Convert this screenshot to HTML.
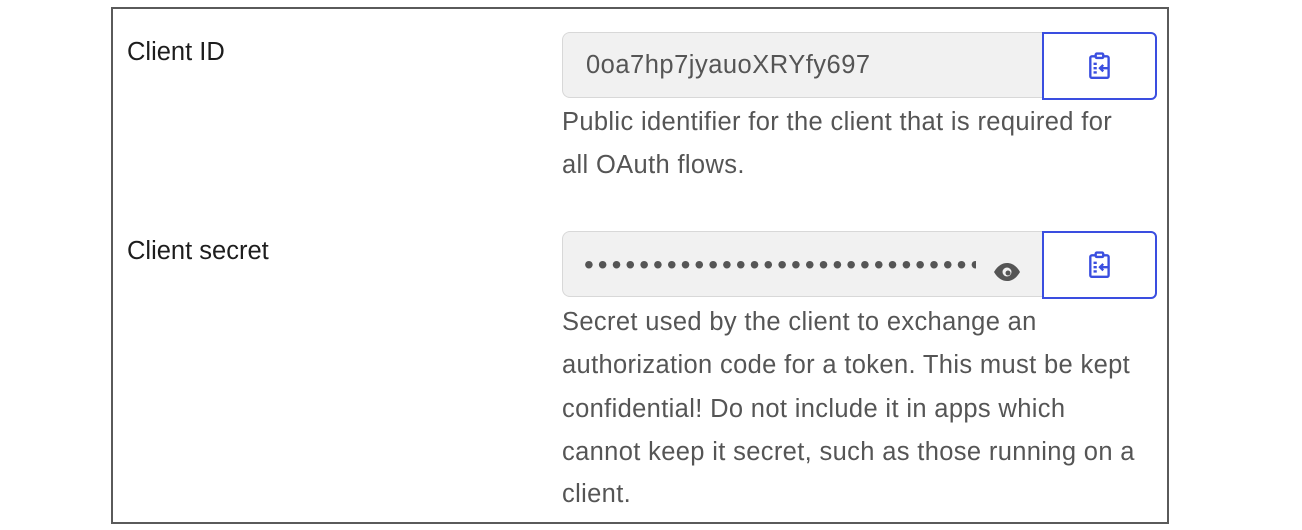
<!DOCTYPE html>
<html><head><style>
body{margin:0;width:1302px;height:530px;background:#fff;font-family:"Liberation Sans",sans-serif;position:relative;overflow:hidden}
.box{position:absolute;left:111px;top:7px;width:1054px;height:513px;border:2px solid #5a5a5a}
.lbl{position:absolute;left:127px;font-size:25.5px;color:#1d1d1d}
.inp{position:absolute;left:562px;width:480px;height:66px;background:#f1f1f1;border:1px solid #d8d8d8;border-right:none;border-radius:8px 0 0 8px;box-sizing:border-box}
.btn{position:absolute;left:1042px;width:115px;height:68px;border:2px solid #3a4ee0;border-radius:0 6px 6px 0;box-sizing:border-box;display:flex;align-items:center;justify-content:center}
.t{position:absolute;left:562px;font-size:25.5px;letter-spacing:0.35px;color:#555;white-space:nowrap}
</style></head><body>
<div class="box"></div>
<div class="lbl" style="top:38px">Client ID</div>
<div class="lbl" style="top:237px">Client secret</div>
<div class="inp" style="top:32px"></div>
<div style="position:absolute;left:586px;top:51px;font-size:25.5px;color:#555;letter-spacing:0.5px">0oa7hp7jyauoXRYfy697</div>
<div class="btn" style="top:32px"><svg width="26" height="28" viewBox="0 0 24 26" fill="none" stroke="#3a4ee0" stroke-width="2.2"><rect x="3" y="4" width="17" height="20" rx="1.5"/><rect x="8" y="1.5" width="7" height="4" rx="1" fill="#fff"/><path d="M6 11h3M6 15h3M6 19h3M20 15h-8M15 12l-3 3 3 3"/></svg></div>
<div class="inp" style="top:231px"></div>
<div style="position:absolute;left:584px;top:249px;font-size:28px;color:#555;letter-spacing:4px;width:392px;overflow:hidden;white-space:nowrap">••••••••••••••••••••••••••••••</div>
<svg style="position:absolute;left:993px;top:263px" width="28" height="18" viewBox="0 0 28 18"><path d="M1 9C5 2 10 0 14 0s9 2 13 9c-4 7-9 9-13 9S5 16 1 9z" fill="#555"/><circle cx="14" cy="9" r="4.5" fill="#f1f1f1"/><circle cx="15" cy="10" r="2.5" fill="#555"/></svg>
<div class="btn" style="top:231px"><svg width="26" height="28" viewBox="0 0 24 26" fill="none" stroke="#3a4ee0" stroke-width="2.2"><rect x="3" y="4" width="17" height="20" rx="1.5"/><rect x="8" y="1.5" width="7" height="4" rx="1" fill="#fff"/><path d="M6 11h3M6 15h3M6 19h3M20 15h-8M15 12l-3 3 3 3"/></svg></div>
<div class="t" style="top:108px">Public identifier for the client that is required for</div>
<div class="t" style="top:151px">all OAuth flows.</div>
<div class="t" style="top:308px">Secret used by the client to exchange an</div>
<div class="t" style="top:351px">authorization code for a token. This must be kept</div>
<div class="t" style="top:395px">confidential! Do not include it in apps which</div>
<div class="t" style="top:438px">cannot keep it secret, such as those running on a</div>
<div class="t" style="top:480px">client.</div>
</body></html>
